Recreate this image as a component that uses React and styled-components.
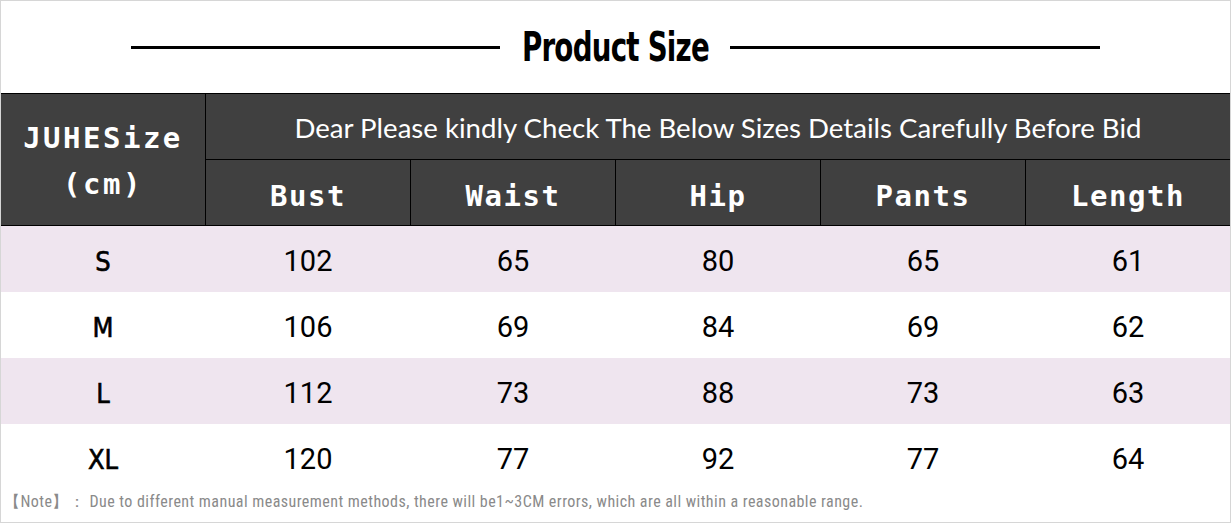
import React from 'react'
import styled, { createGlobalStyle } from 'styled-components'

const GlobalStyle = createGlobalStyle`
  html, body { margin: 0; padding: 0; background: #fff; }
  * { box-sizing: border-box; }
`

const Frame = styled.div`
  width: 1231px;
  height: 523px;
  border: 1px solid #d6d6d6;
  background: #fff;
  overflow: hidden;
`

const TitleBar = styled.div`
  height: 92px;
  display: flex;
  align-items: center;
  justify-content: center;
  padding-bottom: 1px;
`

const Rule = styled.div`
  width: ${(p) => p.w}px;
  height: 3px;
  background: #000;
  margin-top: 2px;
`

const Title = styled.h1`
  margin: 0 22px 0 23px;
  width: 185px;
  display: flex;
  justify-content: center;
  white-space: nowrap;
  font-family: "DejaVu Sans", sans-serif;
  font-stretch: condensed;
  font-weight: 900;
  font-size: 40px;
  letter-spacing: -1px;
  color: #000;

  span {
    display: inline-block;
    transform: scaleX(0.77);
  }
`

const Head = styled.div`
  display: grid;
  grid-template-columns: 204px repeat(4, 204px) 1fr;
  grid-template-rows: 65px 65px;
  gap: 1px;
  background: #000;
  border-top: 1px solid #000;
  border-bottom: 1px solid #000;
`

const HeadCell = styled.div`
  background: #404040;
  color: #fff;
  display: flex;
  align-items: center;
  justify-content: center;
  text-align: center;
  font-family: "DejaVu Sans Mono", monospace;
  font-weight: bold;
  font-size: 29px;
  letter-spacing: 1.5px;
  padding-top: 6px;
`

const Corner = styled(HeadCell)`
  grid-row: 1 / span 2;
  line-height: 46px;
  padding-top: 2px;
  letter-spacing: 2.5px;
`

const Notice = styled(HeadCell)`
  grid-column: 2 / span 5;
  font-family: "Lato", "Liberation Sans", sans-serif;
  font-weight: 400;
  font-size: 27.6px;
  letter-spacing: 0;
  padding-top: 2px;
`

const Row = styled.div`
  display: grid;
  grid-template-columns: 204px repeat(4, 204px) 1fr;
  column-gap: 1px;
  height: 66px;
  background: ${(p) => (p.tinted ? '#efe5ef' : '#fff')};
`

const Cell = styled.div`
  display: flex;
  align-items: center;
  justify-content: center;
  color: #000;
  font-family: ${(p) => (p.label ? '"DejaVu Sans", sans-serif' : '"Roboto", "Liberation Sans", sans-serif')};
  font-stretch: ${(p) => (p.label ? 'condensed' : 'normal')};
  -webkit-text-stroke: ${(p) => (p.label ? '0.6px #000' : '0')};
  font-size: ${(p) => (p.label ? 27 : 29)}px;
  padding-top: 4px;
`

const Note = styled.p`
  margin: 0;
  padding: 2px 0 0 3px;
  font-family: "Roboto", "Liberation Sans", sans-serif;
  font-stretch: condensed;
  font-size: 16px;
  letter-spacing: 0.45px;
  color: #8a8a8a;
`

const columns = ['Bust', 'Waist', 'Hip', 'Pants', 'Length']
const rows = [
  ['S', 102, 65, 80, 65, 61],
  ['M', 106, 69, 84, 69, 62],
  ['L', 112, 73, 88, 73, 63],
  ['XL', 120, 77, 92, 77, 64],
]

export default function App() {
  return (
    <>
      <GlobalStyle />
      <Frame>
        <TitleBar>
          <Rule w={369} />
          <Title><span>Product Size</span></Title>
          <Rule w={370} />
        </TitleBar>
        <Head>
          <Corner>JUHESize<br />(cm)</Corner>
          <Notice>Dear Please kindly Check The Below Sizes Details Carefully Before Bid</Notice>
          {columns.map((c) => (
            <HeadCell key={c}>{c}</HeadCell>
          ))}
        </Head>
        {rows.map((r, i) => (
          <Row key={r[0]} tinted={i % 2 === 0}>
            {r.map((v, j) => (
              <Cell key={j} label={j === 0}>{v}</Cell>
            ))}
          </Row>
        ))}
        <Note>【Note】： Due to different manual measurement methods, there will be1~3CM errors, which are all within a reasonable range.</Note>
      </Frame>
    </>
  )
}
